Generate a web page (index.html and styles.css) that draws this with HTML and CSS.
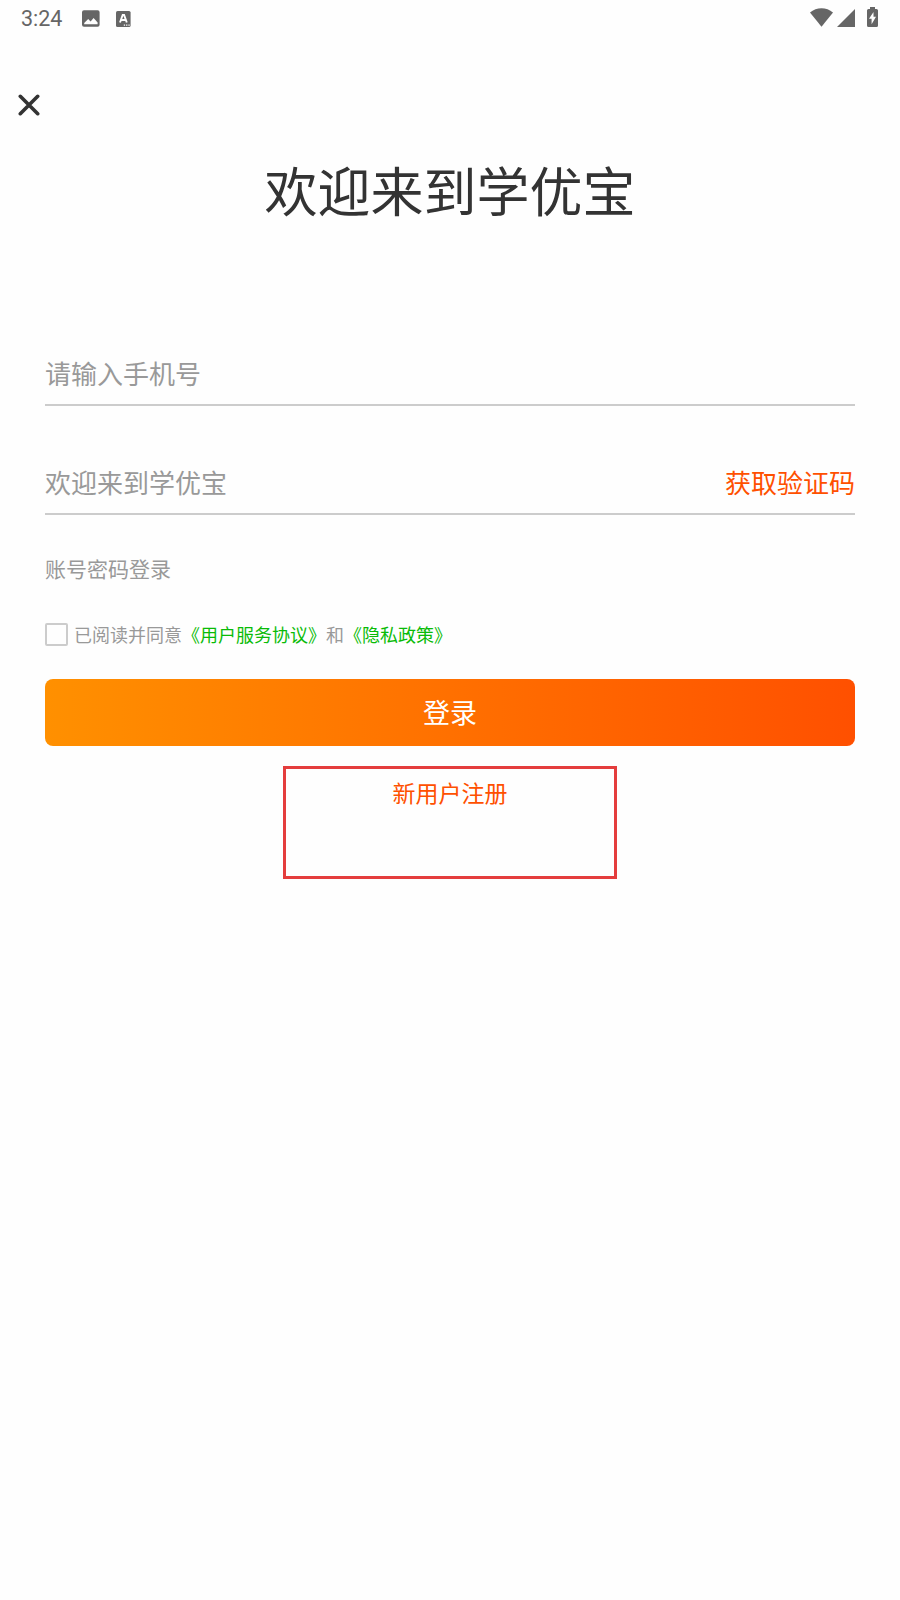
FILE: index.html
```
<!DOCTYPE html>
<html lang="zh-CN">
<head>
    <meta charset="UTF-8">
    <meta name="viewport" content="width=device-width, initial-scale=1.0">
    <title>学优宝 登录</title>
    <link rel="stylesheet" href="styles.css">
</head>
<body>

    <header class="status-bar">
        <span class="time">3:24</span>
        <svg class="icon-image" width="18" height="18" viewBox="0 0 18 18">
            <path fill="#666" fill-rule="evenodd" d="M2 0.2h13.6a2 2 0 0 1 2 2v12.6a2 2 0 0 1-2 2H2a2 2 0 0 1-2-2V2.200a2 2 0 0 1 2-2zM2.200 14.200h13.400v-1.600L11.600 8l-3 3.600L6.200 9 2.200 13z"/>
        </svg>
        <svg class="icon-a" width="15" height="16" viewBox="0 0 15 16">
            <rect width="14.600" height="16" rx="1.600" fill="#666"/>
            <path d="M4 11.500 6.700 4h1.400l2.700 7.500M5 9h4.800" fill="none" stroke="#fff" stroke-width="1.900"/>
            <path d="M7.800 14.200h6" stroke="#fff" stroke-width="1.200" stroke-dasharray="1.300 1"/>
        </svg>
        <div class="status-right">
            <svg width="23" height="19" viewBox="0 0 23 19">
                <path d="M0 4.500C6.500-1.200 16.500-1.200 23 4.500L11.500 18.700z" fill="#666"/>
            </svg>
            <svg width="18" height="18" viewBox="0 0 18 18">
                <path d="M18 0v18H0z" fill="#666"/>
            </svg>
            <svg class="battery" width="11" height="20" viewBox="0 0 11 20">
                <path d="M3 0h5v2h1.500A1.500 1.500 0 0 1 11 3.500v15A1.500 1.500 0 0 1 9.500 20h-8A1.500 1.500 0 0 1 0 18.500v-15A1.500 1.500 0 0 1 1.500 2H3z" fill="#666"/>
                <path d="M6.500 5 2 11.800h2.600v5.400L9 9.800H6.500z" fill="#fff"/>
            </svg>
        </div>
    </header>

    <button class="close" type="button" aria-label="关闭">
        <svg width="22" height="22" viewBox="0 0 22 22">
            <path d="M2.300 2.300 19.700 19.700M19.700 2.300 2.300 19.700" stroke="#333" stroke-width="3.600" stroke-linecap="round"/>
        </svg>
    </button>

    <h1>欢迎来到学优宝</h1>

    <form id="loginForm">
        <div class="field">
            <input type="tel" placeholder="请输入手机号">
        </div>
        <div class="field">
            <input type="text" placeholder="欢迎来到学优宝">
            <a class="get-code">获取验证码</a>
        </div>

        <a class="password-login">账号密码登录</a>

        <label class="agreement">
            <input type="checkbox">
            <span>已阅读并同意<a>《用户服务协议》</a>和<a>《隐私政策》</a></span>
        </label>

        <button class="login" type="button">登录</button>
    </form>

    <div class="register">
        <a>新用户注册</a>
    </div>

</body>
</html>
```
FILE: styles.css
```
* {
    margin: 0;
    padding: 0;
    box-sizing: border-box;
}

body {
    font-family: "Noto Sans CJK SC", sans-serif;
    background-color: #fefefe;
    color: #333;
    min-height: 1600px;
}

svg {
    display: block;
}

button {
    border: none;
    background: none;
    font-family: inherit;
}

/* Status bar */
.status-bar {
    display: flex;
    align-items: center;
    height: 37px;
    padding: 0 22px 0 21px;
    color: #666;
}

.time {
    width: 60px;
    font-family: Roboto, sans-serif;
    font-size: 21.5px;
}

.icon-image {
    margin-left: 1px;
}

.icon-a {
    margin-left: 16px;
}

.status-right {
    display: flex;
    align-items: center;
    margin-left: auto;
    margin-bottom: 2px;
    gap: 4px;
}

.battery {
    margin-left: 8px;
    margin-bottom: 2px;
}

.close {
    display: block;
    margin: 57px 0 0 18px;
}

h1 {
    margin-top: 33px;
    text-align: center;
    font-size: 53px;
    line-height: 80px;
    font-weight: 400;
}

/* Form */
#loginForm {
    margin: 107px 45px 0;
}

.field {
    display: flex;
    align-items: center;
    height: 70px;
    padding-top: 4px;
    border-bottom: 2px solid #ccc;
}

.field + .field {
    margin-top: 39px;
}

.field input {
    flex: 1;
    height: 60px;
    border: none;
    outline: none;
    background: none;
    font-family: inherit;
    font-size: 26px;
}

.field input::placeholder {
    color: #999;
}

.get-code {
    font-size: 26px;
    color: #ff5000;
}

.password-login {
    display: block;
    margin-top: 38px;
    font-size: 21px;
    line-height: 30px;
    color: #999;
}

.agreement {
    display: flex;
    align-items: center;
    gap: 6px;
    margin-top: 39px;
    font-size: 18px;
    line-height: 24px;
    color: #999;
}

.agreement input {
    appearance: none;
    width: 23px;
    height: 23px;
    border: 2px solid #ccc;
    border-radius: 2px;
}

.agreement a {
    color: #09bb07;
}

.login {
    display: block;
    width: 100%;
    height: 67px;
    margin-top: 33px;
    padding-bottom: 2px;
    border-radius: 8px;
    background: linear-gradient(90deg, #ff9000, #ff5000);
    color: #fff;
    font-size: 27px;
}

.register {
    width: 334px;
    height: 113px;
    margin: 20px auto 0;
    padding-top: 6px;
    border: 3px solid #e43d3d;
    text-align: center;
    font-size: 23px;
    line-height: 34px;
    color: #ff5000;
}
```
